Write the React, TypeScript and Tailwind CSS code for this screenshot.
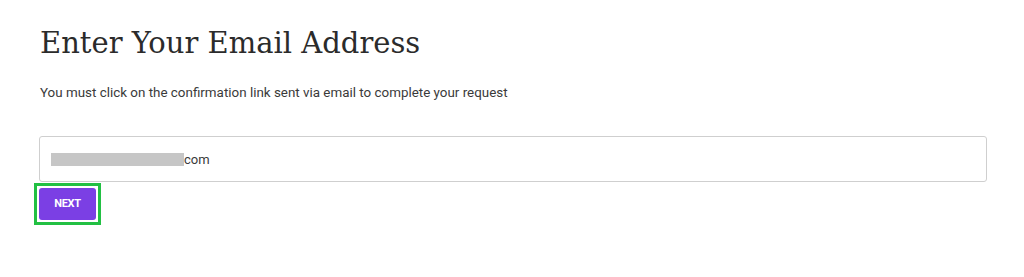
import React from 'react';

export default function App() {
  return (
    <div className="w-[1024px] h-[277px] bg-white pl-[39px] pt-[24px]" style={{ fontFamily: 'Roboto, "Liberation Sans", sans-serif' }}>
      <h1 className="text-[29px] leading-[38px] text-[#2b2b2b] ml-[1px]" style={{ fontFamily: '"DejaVu Serif", "Liberation Serif", serif' }}>
        Enter Your Email Address
      </h1>
      <p className="mt-[23px] ml-[1px] text-[13.4px] leading-[16px] text-[#3a3a3a]">
        You must click on the confirmation link sent via email to complete your request
      </p>
      <div className="mt-[35px] w-[948px] h-[46px] border border-[#cfcfcf] rounded-[3px] flex items-center pl-[11px]">
        <span className="inline-block w-[133px] h-[13px] bg-[#c6c6c6]" />
        <span className="text-[13px] text-[#3a3a3a] leading-none">com</span>
      </div>
      <div className="mt-[1px] -ml-[5px] w-[67px] h-[42px] border-[3px] border-[#22c043] p-[2px]">
        <button className="w-full h-full bg-[#7b3fe4] rounded-[3px] text-white text-[11px] font-bold tracking-tight">
          NEXT
        </button>
      </div>
    </div>
  );
}
